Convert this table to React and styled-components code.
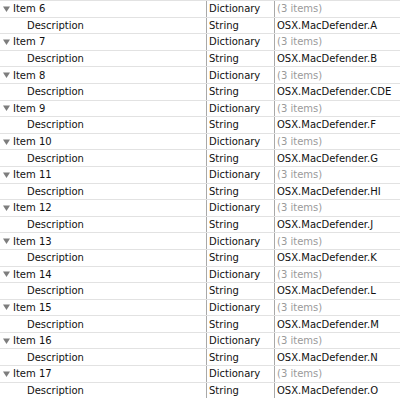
import React from "react";
import styled, { createGlobalStyle } from "styled-components";

const Global = createGlobalStyle`
  html, body { margin: 0; padding: 0; background: #fff; }
  body { font-family: "DejaVu Sans", "Liberation Sans", sans-serif; }
`;

const Table = styled.div`
  width: 400px;
  height: 400px;
  overflow: hidden;
  background: #fff;
`;

const Row = styled.div`
  display: grid;
  grid-template-columns: 206px 68px 1fr;
  height: 16.6px;
  box-sizing: border-box;
  border-top: 1px solid #e2e2e2;
  font-size: 10px;
  color: #111;
`;

const KeyCell = styled.div`
  display: flex;
  align-items: center;
  padding-left: ${(p) => (p.$child ? 27 : 3)}px;
  white-space: nowrap;
  overflow: hidden;
`;

const Cell = styled.div`
  display: flex;
  align-items: center;
  border-left: 1px solid #a9a9a9;
  padding-left: ${(p) => p.$pad}px;
  white-space: nowrap;
  overflow: hidden;
  color: ${(p) => (p.$muted ? "#9a9a9a" : "#111")};
`;

const Toggle = styled.svg`
  width: 7px;
  height: 6px;
  margin-right: 3px;
  flex: none;
`;

const Triangle = () => (
  <Toggle viewBox="0 0 7 6">
    <path d="M0 0.5 H7 L3.5 6 Z" fill="#7d7d7d" />
  </Toggle>
);

const suffixes = ["A", "B", "CDE", "F", "G", "HI", "J", "K", "L", "M", "N", "O"];

export default function App() {
  return (
    <>
      <Global />
      <Table>
        {suffixes.map((s, i) => (
          <React.Fragment key={s}>
            <Row>
              <KeyCell>
                <Triangle />
                Item {i + 6}
              </KeyCell>
              <Cell $pad={2}>Dictionary</Cell>
              <Cell $pad={2} $muted>(3 items)</Cell>
            </Row>
            <Row>
              <KeyCell $child>Description</KeyCell>
              <Cell $pad={2}>String</Cell>
              <Cell $pad={2}>OSX.MacDefender.{s}</Cell>
            </Row>
          </React.Fragment>
        ))}
      </Table>
    </>
  );
}
